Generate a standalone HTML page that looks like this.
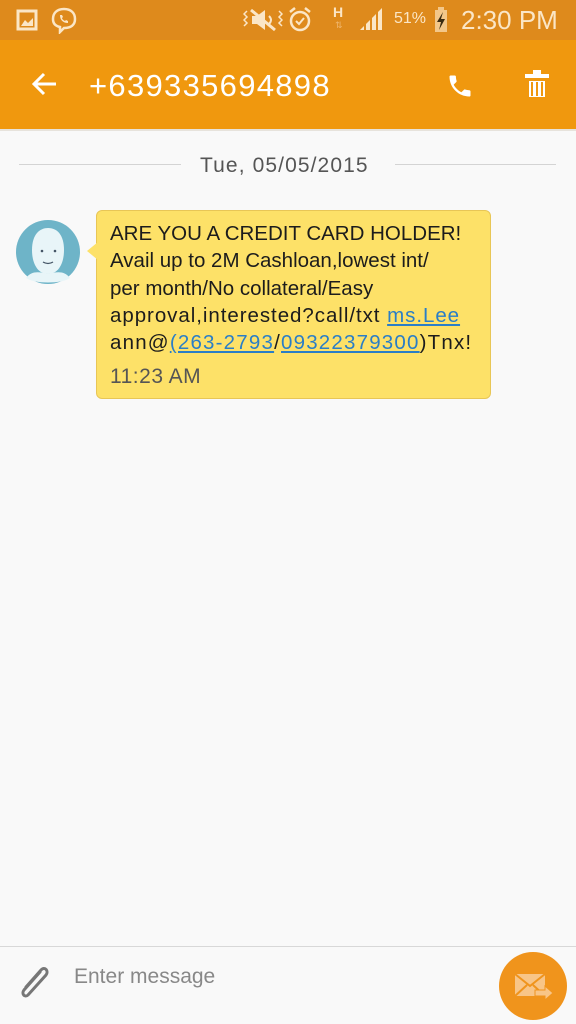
<!DOCTYPE html>
<html><head><meta charset="utf-8"><style>
body{margin:0;width:576px;height:1024px;background:#f9f9f9;font-family:"Liberation Sans",sans-serif;position:relative;overflow:hidden}
.sb{position:absolute;top:0;left:0;width:576px;height:40px;background:#de8a1c;color:#fbe6c6}
.ab{position:absolute;top:40px;left:0;width:576px;height:89px;background:#f0980e;color:#fff}
.abs{position:absolute;top:129px;left:0;width:576px;height:2px;background:#e7e3dc}
.t{position:absolute;white-space:nowrap}
.bub{position:absolute;left:96px;top:210px;width:395px;height:189px;background:#fde168;border:1px solid #e8c656;border-radius:6px;box-sizing:border-box}
.msg{position:absolute;left:110px;top:220px;font-size:20.5px;line-height:27.3px;color:#1c1c1c;white-space:nowrap}
.msg a{color:#2a7ec7;text-decoration:underline}
</style></head><body>
<div class="sb">
<svg class="t" style="left:16px;top:9px" width="22" height="22" viewBox="0 0 22 22"><rect x="2" y="2" width="18" height="18" fill="none" stroke="#fbe6c6" stroke-width="3"/><path d="M5 17 L9 11 L12 14 L17 9 L17 17Z" fill="#fbe6c6"/></svg>
<svg class="t" style="left:50px;top:6px" width="28" height="28" viewBox="0 0 28 28"><path d="M14 3 C21 3 25 7 25 13 C25 19 21 22 14 22 L10 26 L10 21 C5 20 3 17 3 13 C3 7 7 3 14 3Z" fill="none" stroke="#fbe6c6" stroke-width="2.5"/><path d="M10 9 C10 14 13 17 18 17 L18 15 L16 14 L15 15 C13 14 12 13 12 12 L13 11 L12 9Z" fill="#fbe6c6"/></svg>
<svg class="t" style="left:243px;top:8px" width="40" height="24" viewBox="0 0 40 24"><path d="M4 3 L1 6 L4 9 L1 12 L4 15 L1 18 M36 3 L39 6 L36 9 L39 12 L36 15 L39 18" fill="none" stroke="#fbe6c6" stroke-width="1.5"/><path d="M9 8 H14 L22 2 V22 L14 16 H9Z" fill="#fbe6c6"/><path d="M8 2 L32 22" stroke="#fbe6c6" stroke-width="3"/><path d="M26 8 Q30 12 26 16" fill="none" stroke="#fbe6c6" stroke-width="2"/></svg>
<svg class="t" style="left:287px;top:6px" width="26" height="28" viewBox="0 0 26 28"><circle cx="13" cy="15" r="9" fill="none" stroke="#fbe6c6" stroke-width="2.5"/><path d="M9 15 L12 18 L17 12" fill="none" stroke="#fbe6c6" stroke-width="2"/><path d="M3 6 L8 2 M23 6 L18 2" stroke="#fbe6c6" stroke-width="2.5"/></svg>
<div class="t" style="left:333px;top:4px;font-size:14px;font-weight:bold">H</div>
<div class="t" style="left:335px;top:20px;font-size:9px;color:#f0b870">⇅</div>
<svg class="t" style="left:358px;top:8px" width="28" height="24" viewBox="0 0 28 24"><path d="M2 22 L6 18 L6 22Z M8 16 L12 12 L12 22 L8 22Z M14 10 L18 6 L18 22 L14 22Z M20 4 L24 0 L24 22 L20 22Z" fill="#fbe6c6"/></svg>
<div class="t" style="left:394px;top:10px;font-size:16px">51%</div>
<svg class="t" style="left:434px;top:7px" width="14" height="26" viewBox="0 0 14 26"><rect x="1" y="3" width="12" height="22" fill="#f3c78a"/><rect x="4" y="0" width="6" height="3" fill="#f3c78a"/><path d="M9 5 L3 15 L7 15 L5 23 L11 12 L7 12Z" fill="#3a2a10"/></svg>
<div class="t" style="left:461px;top:5px;font-size:26px">2:30 PM</div>
</div>
<div class="ab">
<svg class="t" style="left:30px;top:31px" width="28" height="26" viewBox="0 0 28 26"><path d="M26 13 L4 13 M14 3 L4 13 L14 23" fill="none" stroke="#fff" stroke-width="3"/></svg>
<div class="t" style="left:89px;top:28px;font-size:31px;letter-spacing:1.3px">+639335694898</div>
<svg class="t" style="left:446px;top:32px" width="28" height="28" viewBox="0 0 24 24"><path d="M6.6 10.8c1.4 2.8 3.8 5.1 6.6 6.6l2.2-2.2c.3-.3.7-.4 1-.2 1.1.4 2.3.6 3.6.6.6 0 1 .4 1 1V20c0 .6-.4 1-1 1C10.6 21 3 13.4 3 4c0-.6.4-1 1-1h3.5c.6 0 1 .4 1 1 0 1.3.2 2.5.6 3.6.1.3 0 .7-.2 1z" fill="#fff"/></svg>
<svg class="t" style="left:524px;top:30px" width="26" height="30" viewBox="0 0 26 30"><rect x="1" y="4" width="24" height="4" fill="#fff"/><rect x="9" y="0" width="8" height="4" fill="#fff"/><path d="M4 10 H22 V28 H4Z M8 12 V26 M13 12 V26 M18 12 V26" fill="#fff" stroke="#f0980e" stroke-width="2"/></svg>
</div>
<div class="abs"></div>
<div class="t" style="left:19px;top:164px;width:162px;height:1px;background:#d4d4d4"></div>
<div class="t" style="left:395px;top:164px;width:161px;height:1px;background:#d4d4d4"></div>
<div class="t" style="left:200px;top:154px;font-size:21px;color:#555;letter-spacing:1.1px">Tue, 05/05/2015</div>
<svg class="t" style="left:16px;top:220px" width="64" height="64" viewBox="0 0 64 64"><circle cx="32" cy="32" r="32" fill="#6eb4c8"/><path d="M16 30 C16 14 24 8 32 8 C42 8 48 16 48 30 C48 44 42 54 32 54 C22 54 16 44 16 30Z" fill="#e8f5f8"/><path d="M10 58 C16 50 24 52 32 54 C40 52 48 50 54 58 C46 64 18 64 10 58Z" fill="#e8f5f8"/><circle cx="26" cy="31" r="1.3" fill="#456"/><circle cx="39" cy="31" r="1.3" fill="#456"/><path d="M27 42 Q32 45 37 42" fill="none" stroke="#456" stroke-width="1.3"/></svg>
<div class="bub"></div>
<svg class="t" style="left:87px;top:242px" width="11" height="18" viewBox="0 0 11 18"><path d="M11 0 L0 9 L11 18Z" fill="#fde168"/></svg>
<div class="msg">ARE YOU A CREDIT CARD HOLDER!<br>Avail up to 2M Cashloan,lowest int/<br>per month/No collateral/Easy<br><span style="letter-spacing:0.95px">approval,interested?call/txt <a>ms.Lee</a></span><br><span style="letter-spacing:1.2px">ann@<a>(263-2793</a>/<a>09322379300</a>)Tnx!</span></div>
<div class="t" style="left:110px;top:365px;font-size:21px;color:#555;letter-spacing:0.5px">11:23 AM</div>
<div class="t" style="left:0;top:946px;width:576px;height:1px;background:#d8d8d8"></div>
<svg class="t" style="left:16px;top:962px" width="38" height="40" viewBox="0 0 38 40"><path d="M24 10 L8 28 C5 32 9 36 12 33 L30 13 C33 9 29 4 25 8 L10 25" fill="none" stroke="#777" stroke-width="3" stroke-linecap="round"/></svg>
<div class="t" style="left:74px;top:965px;font-size:21px;color:#888">Enter message</div>
<div class="t" style="left:499px;top:952px;width:68px;height:68px;border-radius:50%;background:#f0941c"></div>
<svg class="t" style="left:513px;top:970px" width="44" height="36" viewBox="0 0 44 36"><rect x="2" y="4" width="30" height="22" fill="#f8c587"/><path d="M2 4 L17 16 L32 4 M2 26 L14 15 M32 26 L20 15" fill="none" stroke="#f0941c" stroke-width="2"/><path d="M22 20 H32 V16 L40 23 L32 30 V26 H22Z" fill="#f8c587" stroke="#f0941c" stroke-width="1"/></svg>
</body></html>
